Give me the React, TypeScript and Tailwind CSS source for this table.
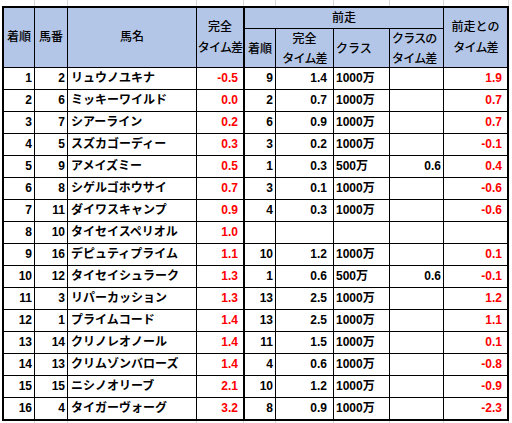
import React from 'react';

type Row = [string, string, string, string, string, string, string, string, string];

const rows: Row[] = [
  ['1', '2', 'リュウノユキナ', '-0.5', '9', '1.4', '1000万', '', '1.9'],
  ['2', '6', 'ミッキーワイルド', '0.0', '2', '0.7', '1000万', '', '0.7'],
  ['3', '7', 'シアーライン', '0.2', '6', '0.9', '1000万', '', '0.7'],
  ['4', '5', 'スズカゴーディー', '0.3', '3', '0.2', '1000万', '', '-0.1'],
  ['5', '9', 'アメイズミー', '0.5', '1', '0.3', '500万', '0.6', '0.4'],
  ['6', '8', 'シゲルゴホウサイ', '0.7', '3', '0.1', '1000万', '', '-0.6'],
  ['7', '11', 'ダイワスキャンプ', '0.9', '4', '0.3', '1000万', '', '-0.6'],
  ['8', '10', 'タイセイスペリオル', '1.0', '', '', '', '', ''],
  ['9', '16', 'デピュティプライム', '1.1', '10', '1.2', '1000万', '', '0.1'],
  ['10', '12', 'タイセイシュラーク', '1.3', '1', '0.6', '500万', '0.6', '-0.1'],
  ['11', '3', 'リパーカッション', '1.3', '13', '2.5', '1000万', '', '1.2'],
  ['12', '1', 'プライムコード', '1.4', '13', '2.5', '1000万', '', '1.1'],
  ['13', '14', 'クリノレオノール', '1.4', '11', '1.5', '1000万', '', '0.1'],
  ['14', '13', 'クリムゾンバローズ', '1.4', '4', '0.6', '1000万', '', '-0.8'],
  ['15', '15', 'ニシノオリーブ', '2.1', '10', '1.2', '1000万', '', '-0.9'],
  ['16', '4', 'タイガーヴォーグ', '3.2', '8', '0.9', '1000万', '', '-2.3'],
];

// sheet gridlines outside the bordered table
function GridStrip({ h }: { h: string }) {
  return (
    <div className={`flex ${h}`}>
      <div className="w-[35px] border-r border-[#d9d9d9]" />
      <div className="w-[33px] border-r border-[#d9d9d9]" />
      <div className="w-[129px] border-r border-[#d9d9d9]" />
      <div className="w-[47px] border-r border-[#d9d9d9]" />
      <div className="w-[32px] border-r border-[#d9d9d9]" />
      <div className="w-[58px] border-r border-[#d9d9d9]" />
      <div className="w-[56px] border-r border-[#d9d9d9]" />
      <div className="w-[54px] border-r border-[#d9d9d9]" />
      <div className="w-[65px] border-r border-[#d9d9d9]" />
    </div>
  );
}

const tl = 'whitespace-nowrap tracking-[-0.8px]';

export default function App() {
  return (
    <div
      className="w-[512px] h-[423px] bg-white overflow-hidden text-[12px] text-black"
      style={{ fontFamily: '"Liberation Sans", "Noto Sans CJK JP", sans-serif' }}
    >
      <GridStrip h="h-[6px]" />

      <div className="ml-[2px] w-[507px] border-2 border-black">
        {/* Header */}
        <div className="flex h-[60px] bg-[#b4c6e7] border-b border-black leading-[21px] font-medium">
          <div className="w-[30px] flex items-center justify-center">着順</div>
          <div className="w-[33px] border-l border-black flex items-center justify-center">馬番</div>
          <div className="w-[129px] border-l border-black flex items-center justify-center">馬名</div>
          <div className="w-[47px] border-l border-black flex flex-col items-center justify-center">
            <span>完全</span>
            <span className={tl}>タイム差</span>
          </div>
          <div className="w-[200px] border-l-2 border-black flex flex-col leading-[20px]">
            <div className="h-[22px] border-b border-black flex items-center justify-center">前走</div>
            <div className="flex flex-1">
              <div className="w-[30px] flex items-center justify-center">着順</div>
              <div className="w-[58px] border-l border-black flex flex-col items-center justify-center">
                <span>完全</span>
                <span className={tl}>タイム差</span>
              </div>
              <div className="w-[56px] border-l border-black flex items-center pl-[2px]">クラス</div>
              <div className="w-[54px] border-l border-black flex flex-col justify-center pl-[2px]">
                <span className={tl}>クラスの</span>
                <span className={tl}>タイム差</span>
              </div>
            </div>
          </div>
          <div className="w-[64px] border-l border-black flex flex-col items-center justify-center">
            <span>前走との</span>
            <span className={tl}>タイム差</span>
          </div>
        </div>

        {/* Body */}
        {rows.map((r, i) => (
          <div
            key={r[0]}
            className={`flex items-stretch leading-[21px] font-bold ${i < rows.length - 1 ? 'h-[22px] border-b border-black' : 'h-[21px]'}`}
          >
            <div className="w-[30px] text-right pr-[2px]">{r[0]}</div>
            <div className="w-[33px] border-l border-black text-right pr-[2px]">{r[1]}</div>
            <div className="w-[129px] border-l border-black pl-[3px] whitespace-nowrap">{r[2]}</div>
            <div className="w-[47px] border-l border-black text-right pr-[5px] text-[#ff0000]">{r[3]}</div>
            <div className="w-[32px] border-l-2 border-black text-right pr-[2px]">{r[4]}</div>
            <div className="w-[58px] border-l border-black text-right pr-[6px]">{r[5]}</div>
            <div className="w-[56px] border-l border-black pl-[2px]">{r[6]}</div>
            <div className="w-[54px] border-l border-black text-right pr-[2px]">{r[7]}</div>
            <div className="w-[64px] border-l border-black text-right pr-[5px] text-[#ff0000]">{r[8]}</div>
          </div>
        ))}
      </div>

      <GridStrip h="h-[6px]" />
    </div>
  );
}
